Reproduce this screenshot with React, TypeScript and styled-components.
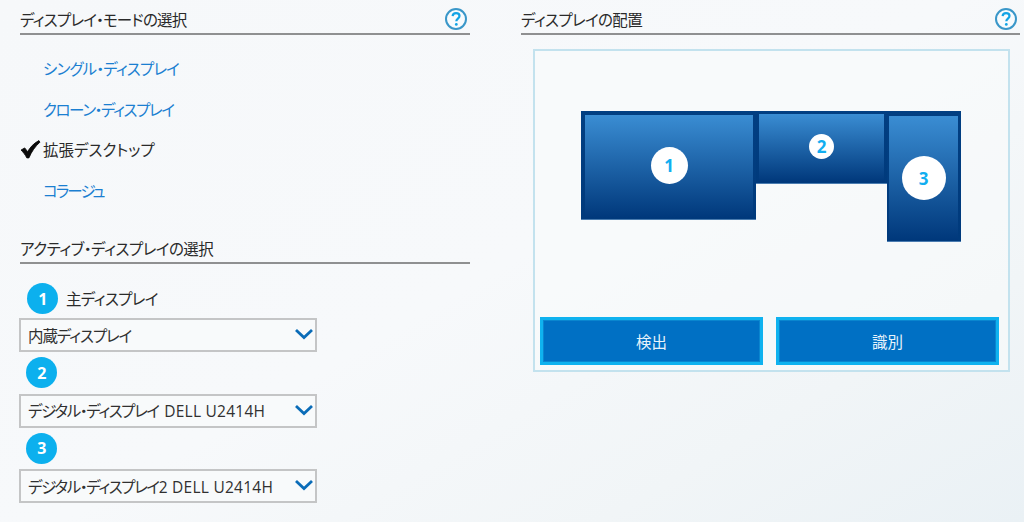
import React from "react";
import styled, { createGlobalStyle } from "styled-components";

const Global = createGlobalStyle`
  html, body { margin: 0; padding: 0; width: 1024px; height: 522px; overflow: hidden; }
  body { font-family: "Noto Sans CJK JP", "Noto Sans", sans-serif; font-feature-settings: "palt"; }
`;
const Page = styled.div`
  width: 1024px; height: 522px; box-sizing: border-box;
  display: grid; grid-template-columns: 450px 499px; column-gap: 51px;
  padding: 8px 4px 0 20px;
  background: linear-gradient(150deg, #f6f8fa 0%, #f7f9fb 50%, #f1f5f7 78%, #eaf1f5 100%);
`;
const Column = styled.section`display: flex; flex-direction: column;`;
const Header = styled.header<{ $ls?: number }>`
  height: 27px; box-sizing: border-box; display: flex; align-items: center; justify-content: space-between;
  border-bottom: 2px solid #8f9091; color: #2a2a2a; font-size: 15.500px; letter-spacing: ${(p) => p.$ls ?? -0.65}px; line-height: 24px; padding-bottom: 3px;
`;
const HelpIcon = styled.svg`width: 24px; height: 24px; margin-right: 2px; flex: none;`;
const ModeList = styled.ul`list-style: none; margin: 13px 0 0; padding: 0; display: flex; flex-direction: column;`;
const Mode = styled.li<{ $active?: boolean; $ls: number }>`
  height: 40.600px; display: flex; align-items: center; position: relative; padding-left: 23px;
  font-size: 15.500px; letter-spacing: ${(p) => p.$ls}px; color: ${(p) => (p.$active ? "#2a2a2a" : "#1b7fd1")};
`;
const Check = styled.svg`position: absolute; left: 0; top: 10px; width: 21px; height: 21px;`;
const SubHeader = styled(Header)`margin-top: 27px;`;
const Row = styled.div`height: 31px; display: flex; align-items: center; gap: 8px; padding-left: 7px; font-size: 15.500px; letter-spacing: -0.650px; color: #2a2a2a;`;
const FirstRow = styled(Row)`margin-top: 19px;`;
const RowLabel = styled.span`margin-top: -2px;`;
const Badge = styled.span`
  width: 31px; height: 31px; border-radius: 50%; background: #0cb0ee; color: #fff; font-weight: 700; font-size: 16px;
  font-family: "Open Sans", sans-serif; display: flex; align-items: center; justify-content: center; flex: none;
`;
const Selects = styled.div`display: flex; flex-direction: column; gap: 5px; margin-top: 4px; margin-left: -1px;`;
const Group = styled.div`display: flex; flex-direction: column; gap: 5.500px; width: 298px;`;
const Select = styled.div`
  height: 34px; box-sizing: border-box; width: 298px; border: 2px solid #c4c5c6; display: flex; align-items: center; justify-content: space-between;
  padding: 0 1px 0 7px; font-size: 15.500px; color: #303030; background: #f8fafb; white-space: nowrap;
`;
const SelectText = styled.span<{ $ls: number }>`font-family: "Noto Sans CJK JP", sans-serif; letter-spacing: ${(p) => p.$ls}px;`;
const Latin = styled.span<{ $lead?: number }>`font-family: "Open Sans", sans-serif; letter-spacing: 0.250px; margin-left: ${(p) => p.$lead ?? 0}px;`;
const Chevron = styled.svg`width: 20px; height: 12px; flex: none; margin-top: -2px;`;
const Panel = styled.div`
  position: relative; margin: 14px 10px 0 12px; height: 323px; box-sizing: border-box; border: 2px solid #c3e2ee;
  display: flex; align-items: flex-end; justify-content: space-between; padding: 0 9px 5px 5px; background: rgba(250,251,252,.5);
`;
const Monitor = styled.div<{ $x: number; $w: number; $h: number; $t: number; $l: number }>`
  position: absolute; left: ${(p) => p.$x}px; top: 60px; width: ${(p) => p.$w}px; height: ${(p) => p.$h}px; box-sizing: border-box;
  background: linear-gradient(#3a8dd3 0%, #00387b 100%) padding-box, linear-gradient(#023f82, #003a7c) border-box;
  border: solid transparent;
  border-width: ${(p) => p.$t}px 3px 1px ${(p) => p.$l}px;
  box-shadow: 0 1px 0 #4a7cb0;
  display: flex; align-items: center; justify-content: center;
`;
const MonitorNum = styled.span<{ $s: number; $dy: number }>`
  width: ${(p) => p.$s}px; height: ${(p) => p.$s}px; border-radius: 50%; background: #fff; color: #12aef0;
  font-family: "Open Sans", sans-serif; font-weight: 700; font-size: 17px; display: flex; align-items: center; justify-content: center;
  transform: translateY(${(p) => p.$dy}px);
`;
const Button = styled.button`
  width: 223px; height: 48px; box-sizing: border-box; border: 3px solid #0fb2ef; outline: 1px solid #0a86cf; outline-offset: -4px;
  background: #0070c4; color: #e8f3fb; font-size: 15.500px; font-family: inherit; padding: 0;
`;

const Help = () => (
  <HelpIcon viewBox="0 0 24 24">
    <circle cx="12" cy="12" r="10" fill="#f8fbfd" stroke="#3a97c9" strokeWidth="2" />
    <path d="M8.600 9.200c.2-2 1.600-3 3.500-3 2 0 3.400 1.100 3.400 2.900 0 2.600-3.200 2.600-3.200 5.200" fill="none" stroke="#12a4e6" strokeWidth="2.200" />
    <circle cx="12.300" cy="17.400" r="1.400" fill="#12a4e6" />
  </HelpIcon>
);
const Down = () => (
  <Chevron viewBox="0 0 20 12">
    <path d="M2 2l8 7.500L18 2" fill="none" stroke="#0a6cb8" strokeWidth="2.800" />
  </Chevron>
);

export default function App() {
  return (
    <Page>
      <Global />
      <Column>
        <Header $ls={-0.8}>ディスプレイ・モードの選択<Help /></Header>
        <ModeList>
          <Mode $ls={-0.85}>シングル・ディスプレイ</Mode>
          <Mode $ls={-1.4}>クローン・ディスプレイ</Mode>
          <Mode $active $ls={0}>
            <Check viewBox="0 0 20 20"><path d="M1 10.500l3.500-2 2.800 3.600C9.500 8 13 4.200 18 1.500l1 1.500c-4.500 4-8 9-10.500 15H6.500C5 15 3 12.500 1 10.500z" fill="#0a0a0a" stroke="#0a0a0a" strokeWidth="0.800" /></Check>
            拡張デスクトップ
          </Mode>
          <Mode $ls={-1.9}>コラージュ</Mode>
        </ModeList>
        <SubHeader $ls={-0.5}>アクティブ・ディスプレイの選択</SubHeader>
        <FirstRow><Badge>1</Badge><RowLabel>主ディスプレイ</RowLabel></FirstRow>
        <Selects>
          <Group>
            <Select><SelectText $ls={-1.1}>内蔵ディスプレイ</SelectText><Down /></Select>
          </Group>
          <Group>
            <Row><Badge>2</Badge></Row>
            <Select><SelectText $ls={-1.4}>デジタル・ディスプレイ <Latin $lead={3.5}>DELL U2414H</Latin></SelectText><Down /></Select>
          </Group>
          <Group>
            <Row><Badge>3</Badge></Row>
            <Select><SelectText $ls={-1.4}>デジタル・ディスプレイ<Latin>2 DELL U2414H</Latin></SelectText><Down /></Select>
          </Group>
        </Selects>
      </Column>
      <Column>
        <Header>ディスプレイの配置<Help /></Header>
        <Panel>
          <Monitor $x={46} $w={175} $h={108} $t={4} $l={4}><MonitorNum $s={37} $dy={-1}>1</MonitorNum></Monitor>
          <Monitor $x={221} $w={131} $h={72} $t={3} $l={3}><MonitorNum $s={25} $dy={-2}>2</MonitorNum></Monitor>
          <Monitor $x={352} $w={74} $h={130} $t={5} $l={2}><MonitorNum $s={44} $dy={0}>3</MonitorNum></Monitor>
          <Button>検出</Button>
          <Button>識別</Button>
        </Panel>
      </Column>
    </Page>
  );
}
